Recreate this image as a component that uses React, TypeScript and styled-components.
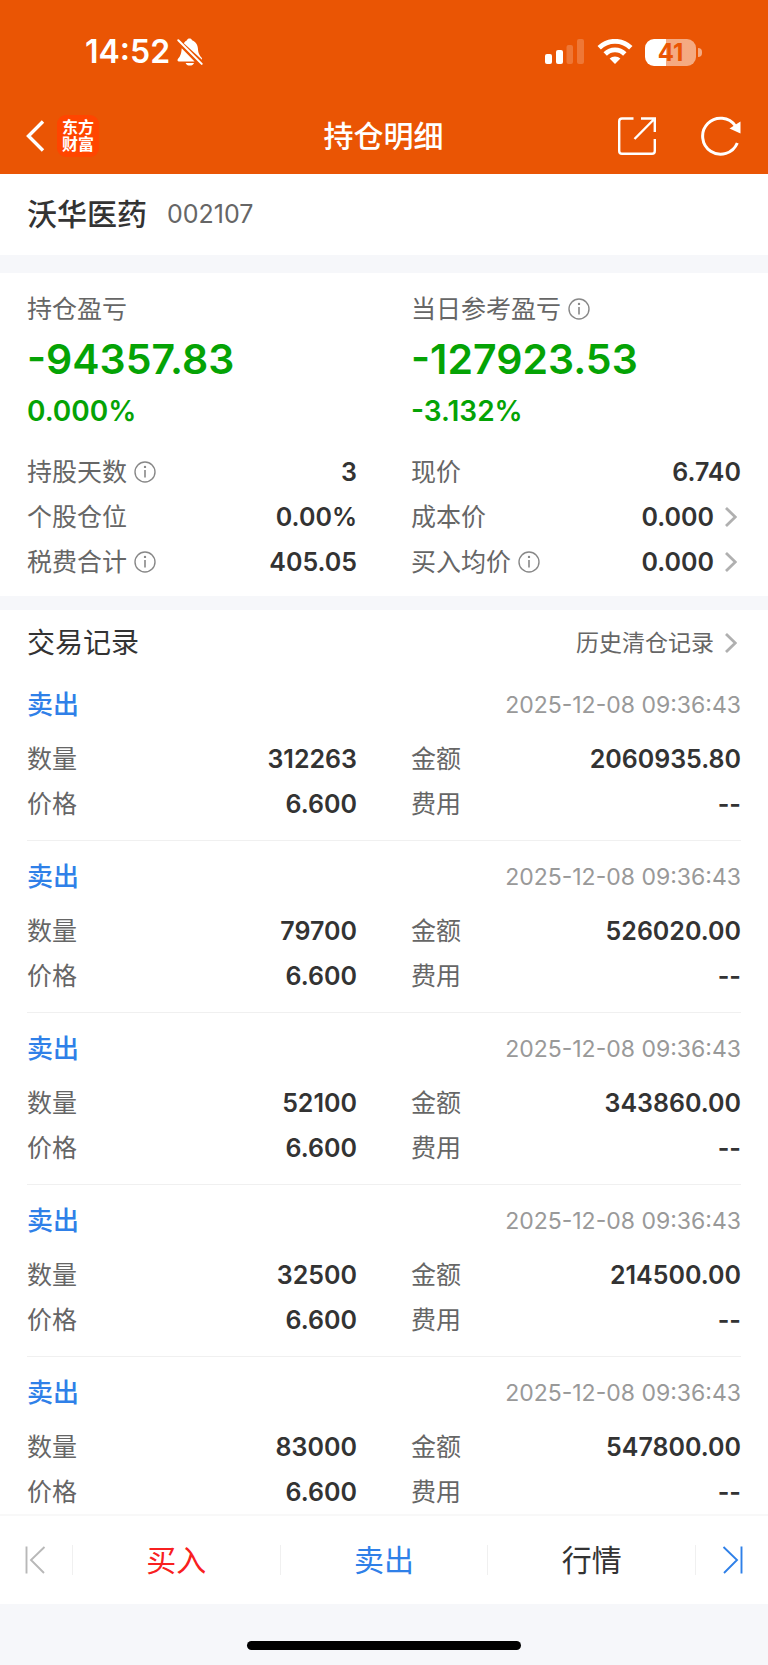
import React from "react";
import styled, { createGlobalStyle } from "styled-components";

const color = {
  brand: "#ea5504",
  ink: "#333333",
  label: "#666666",
  muted: "#999999",
  line: "#f0f0f0",
  band: "#f6f7fa",
  green: "#05a305",
  blue: "#2f80e8",
  red: "#f82020",
};

const GlobalStyle = createGlobalStyle`
  * { box-sizing: border-box; }
  body {
    margin: 0;
    background: #ffffff;
    color: ${color.ink};
    font-family: Inter, "Noto Sans CJK SC", sans-serif;
  }
  h1, h2, h3, p, dl, dd, ul { margin: 0; padding: 0; }
  button {
    padding: 0;
    border: 0;
    background: none;
    color: inherit;
    font: inherit;
    cursor: pointer;
  }
  a { color: inherit; text-decoration: none; }
  svg { display: block; flex: none; }
`;

const Screen = styled.div`
  display: flex;
  flex-direction: column;
  height: 100vh;
`;

const Header = styled.header`
  flex: none;
  padding-bottom: 6px;
  background: ${color.brand};
  color: #ffffff;
`;

const StatusBar = styled.div`
  display: flex;
  align-items: center;
  justify-content: space-between;
  height: 104px;
  padding: 0 66px 0 85px;
`;

const StatusGroup = styled.div<{ $gap: number }>`
  display: flex;
  align-items: center;
  gap: ${(p) => p.$gap}px;
`;

const Clock = styled.time`
  font-size: 32px;
  font-weight: 600;
  line-height: 40px;
`;

const Battery = styled.div`
  display: flex;
  align-items: center;
  gap: 2px;
`;

const BatteryBody = styled.div`
  width: 51px;
  height: 27px;
  border-radius: 9px;
  background: linear-gradient(90deg, #ffffff 41%, rgba(255, 255, 255, 0.5) 41%);
  color: ${color.brand};
  font-size: 24px;
  font-weight: 700;
  line-height: 27px;
  text-align: center;
`;

const BatteryNub = styled.div`
  width: 4px;
  height: 9px;
  border-radius: 0 4px 4px 0;
  background: rgba(255, 255, 255, 0.5);
`;

const NavBar = styled.nav`
  display: grid;
  grid-template-columns: 1fr auto 1fr;
  align-items: center;
  height: 64px;
  padding: 0 27px 0 26px;
`;

const NavSide = styled.div<{ $end?: boolean }>`
  display: flex;
  align-items: center;
  justify-content: ${(p) => (p.$end ? "flex-end" : "flex-start")};
  gap: ${(p) => (p.$end ? 45 : 12)}px;
`;

const Logo = styled.a`
  display: flex;
  flex-direction: column;
  align-items: center;
  justify-content: center;
  width: 42px;
  height: 42px;
  border-radius: 9px;
  background: #ff4500;
  font-size: 16px;
  font-weight: 700;
  line-height: 17px;
`;

const Title = styled.h1`
  font-size: 30px;
  font-weight: 500;
  line-height: 40px;
`;

const Content = styled.main`
  flex: 1;
  min-height: 0;
  overflow-y: auto;
  scrollbar-width: none;
`;

const StockBar = styled.section`
  display: flex;
  align-items: center;
  gap: 20px;
  height: 81px;
  padding: 0 27px 2px;
`;

const StockName = styled.h2`
  font-size: 30px;
  font-weight: 500;
  line-height: 40px;
`;

const StockCode = styled.span`
  color: ${color.label};
  font-size: 25px;
  line-height: 36px;
`;

const Band = styled.div<{ $height: number }>`
  height: ${(p) => p.$height}px;
  background: ${color.band};
`;

const Summary = styled.section`
  padding: 18px 27px 12px;
`;

const Columns = styled.div`
  display: grid;
  grid-template-columns: 1fr 1fr;
  column-gap: 54px;
`;

const Label = styled.span`
  display: flex;
  align-items: center;
  gap: 7px;
  color: ${color.label};
  font-size: 25px;
  line-height: 36px;
`;

const Amount = styled.p`
  color: ${color.green};
  font-size: 41px;
  font-weight: 600;
  line-height: 64px;
`;

const Percent = styled.p`
  color: ${color.green};
  font-size: 28px;
  font-weight: 600;
  line-height: 40px;
`;

const Facts = styled.dl`
  display: grid;
  grid-template-columns: 1fr 1fr;
  column-gap: 54px;
`;

const Fact = styled.div`
  display: flex;
  align-items: center;
  justify-content: space-between;
  height: 45px;
`;

const Value = styled.dd`
  font-size: 25px;
  font-weight: 600;
  line-height: 36px;
`;

const MoreLink = styled.a<{ $quiet?: boolean }>`
  display: flex;
  align-items: center;
  gap: 11px;
  padding-right: 4px;
  color: ${(p) => (p.$quiet ? color.label : "inherit")};
  font-size: ${(p) => (p.$quiet ? 23 : 25)}px;
`;

const FactsBlock = styled.div`
  padding-top: 18px;
`;

const Records = styled.section`
  padding: 0 27px;
`;

const RecordsHead = styled.div`
  display: flex;
  align-items: center;
  justify-content: space-between;
  height: 59px;
  padding-top: 7px;
  line-height: 36px;
`;

const RecordsTitle = styled.h2`
  font-size: 28px;
  font-weight: 400;
`;

const RecordList = styled.ul`
  list-style: none;
`;

const Record = styled.li`
  padding: 18px 0 14px;
  border-bottom: 1px solid ${color.line};
`;

const RecordHead = styled.div`
  display: flex;
  align-items: center;
  justify-content: space-between;
  height: 36px;
  margin-bottom: 13px;
`;

const Side = styled.h3`
  color: ${color.blue};
  font-size: 26px;
  font-weight: 500;
  line-height: 36px;
`;

const Stamp = styled.time`
  color: ${color.muted};
  font-size: 23px;
  line-height: 36px;
`;

const Footer = styled.footer`
  flex: none;
  border-top: 2px solid #f8f8f8;
`;

const Actions = styled.div`
  display: flex;
  align-items: center;
  height: 88px;
`;

const StepButton = styled.button`
  display: flex;
  align-items: center;
  justify-content: center;
  width: 72px;
  height: 100%;
`;

const ActionButton = styled.button<{ $tone: string }>`
  flex: 1;
  height: 30px;
  border-left: 1px solid ${color.line};
  color: ${(p) => p.$tone};
  font-size: 30px;
  line-height: 30px;

  &:last-of-type {
    border-right: 1px solid ${color.line};
  }
`;

const ActionGroup = styled.div`
  display: flex;
  flex: 1;
`;

const HomeArea = styled.div`
  display: flex;
  justify-content: center;
  height: 61px;
  padding-top: 37px;
  background: ${color.band};
`;

const HomeIndicator = styled.div`
  width: 274px;
  height: 9px;
  border-radius: 5px;
  background: #000000;
`;

const InfoIcon = () => (
  <svg width="22" height="22" viewBox="0 0 22 22" fill="none" stroke="#888888">
    <circle cx="11" cy="11" r="10" strokeWidth="1.4" />
    <path d="M11 9v7.5" strokeWidth="1.6" />
    <circle cx="11" cy="5.9" r="1.2" fill="#888888" stroke="none" />
  </svg>
);

const InfoButton = ({ about }: { about: string }) => (
  <button type="button" aria-label={`${about}说明`}>
    <InfoIcon />
  </button>
);

const Chevron = () => (
  <svg width="12" height="20" viewBox="0 0 12 20" fill="none" stroke="#b0b0b0" strokeWidth="2.8">
    <path d="M1 1l9.3 9L1 19" />
  </svg>
);

const MutedBell = () => (
  <svg width="26" height="28" viewBox="0 0 26 28" fill="#ffffff">
    <path d="M6.8 5.2A6.8 6.8 0 0 1 10 2.2C10.2 1 11.3.4 12.5.4S14.8 1 15 2.2C18.2 3.3 20.6 6.2 20.9 10.2C21.2 15 22.3 17 24.5 19.5C25.1 20.3 25.2 21 25 21.8Z" />
    <path d="M4.7 10.3L17.6 23.6H1.9C.6 23.6.1 22.2.9 21.1C3 18.6 4.3 16.5 4.7 10.3Z" />
    <path d="M8.6 25H17C16.5 26.7 14.8 27.6 12.8 27.6S9.1 26.7 8.6 25Z" />
    <path d="M1.3 2.3L24.7 25.9" stroke="#ffffff" strokeWidth="2" strokeLinecap="round" />
  </svg>
);

const Signal = () => (
  <svg width="40" height="26" viewBox="0 0 40 26" fill="#ffffff">
    <rect x="0" y="15" width="7" height="10" rx="2" />
    <rect x="11" y="11" width="7" height="14" rx="2" />
    <rect x="21.5" y="6" width="6.5" height="19" rx="2" opacity=".2" />
    <rect x="32" y="0" width="7" height="25" rx="2" opacity=".2" />
  </svg>
);

const Wifi = () => (
  <svg width="36" height="26" viewBox="0 0 36 26" fill="none" stroke="#ffffff" strokeWidth="4.8">
    <path d="M2.2 8.8A22.4 22.4 0 0 1 33.8 8.8" />
    <path d="M8.2 15A13.8 13.8 0 0 1 27.8 15" />
    <path d="M18 25L12.6 19.6A7.8 7.8 0 0 1 23.4 19.6Z" fill="#ffffff" stroke="none" />
  </svg>
);

const BackIcon = () => (
  <svg width="19" height="32" viewBox="0 0 19 32" fill="none" stroke="#ffffff" strokeWidth="3.4">
    <path d="M17 1.5L2.5 16L17 30.5" />
  </svg>
);

const ShareIcon = () => (
  <svg width="38" height="38" viewBox="0 0 38 38" fill="none" stroke="#ffffff" strokeWidth="2.4">
    <path d="M15.5 1.5H4Q1.2 1.5 1.2 4.3V34Q1.2 36.8 4 36.8H34Q36.8 36.8 36.8 34V22" />
    <path d="M23 1.5H36.8V15M36.8 1.5L16.5 22" />
  </svg>
);

const RefreshIcon = () => (
  <svg width="40" height="40" viewBox="0 0 40 40" fill="none" stroke="#ffffff" strokeWidth="3">
    <path d="M36.3 27A18 18 0 1 1 34.5 10" />
    <path d="M39.5 5.5V17.5L28.5 12.6Z" fill="#ffffff" stroke="none" />
  </svg>
);

const FirstIcon = () => (
  <svg width="22" height="28" viewBox="0 0 22 28" fill="none" stroke="#b8b8b8" strokeWidth="1.9">
    <path d="M1.5 .5V27.5M19.5 1L6 14L19 27" />
  </svg>
);

const LastIcon = () => (
  <svg width="22" height="28" viewBox="0 0 22 28" fill="none" stroke={color.blue} strokeWidth="1.9">
    <path d="M20.5 .5V27.5M2.5 1L16 14L3 27" />
  </svg>
);

type FactItem = { label: string; value: string; info?: boolean; more?: boolean };

const FactRow = ({ label, value, info, more }: FactItem) => (
  <Fact>
    <Label as="dt">
      {label}
      {info && <InfoButton about={label} />}
    </Label>
    <Value>
      {more ? (
        <MoreLink href="#detail">
          {value}
          <Chevron />
        </MoreLink>
      ) : (
        value
      )}
    </Value>
  </Fact>
);

const facts: FactItem[] = [
  { label: "持股天数", value: "3", info: true },
  { label: "现价", value: "6.740" },
  { label: "个股仓位", value: "0.00%" },
  { label: "成本价", value: "0.000", more: true },
  { label: "税费合计", value: "405.05", info: true },
  { label: "买入均价", value: "0.000", info: true, more: true },
];

const records = [
  { quantity: "312263", total: "2060935.80" },
  { quantity: "79700", total: "526020.00" },
  { quantity: "52100", total: "343860.00" },
  { quantity: "32500", total: "214500.00" },
  { quantity: "83000", total: "547800.00" },
];

export default function App() {
  return (
    <Screen>
      <GlobalStyle />
      <Header>
        <StatusBar>
          <StatusGroup $gap={7}>
            <Clock>14:52</Clock>
            <MutedBell />
          </StatusGroup>
          <StatusGroup $gap={12}>
            <Signal />
            <Wifi />
            <Battery>
              <BatteryBody>41</BatteryBody>
              <BatteryNub />
            </Battery>
          </StatusGroup>
        </StatusBar>
        <NavBar>
          <NavSide>
            <button type="button" aria-label="返回">
              <BackIcon />
            </button>
            <Logo href="#home">
              <span>东方</span>
              <span>财富</span>
            </Logo>
          </NavSide>
          <Title>持仓明细</Title>
          <NavSide $end>
            <button type="button" aria-label="分享">
              <ShareIcon />
            </button>
            <button type="button" aria-label="刷新">
              <RefreshIcon />
            </button>
          </NavSide>
        </NavBar>
      </Header>

      <Content>
        <StockBar>
          <StockName>沃华医药</StockName>
          <StockCode>002107</StockCode>
        </StockBar>
        <Band $height={18} />

        <Summary>
          <Columns>
            <div>
              <Label>持仓盈亏</Label>
              <Amount>-94357.83</Amount>
              <Percent>0.000%</Percent>
            </div>
            <div>
              <Label>
                当日参考盈亏
                <InfoButton about="当日参考盈亏" />
              </Label>
              <Amount>-127923.53</Amount>
              <Percent>-3.132%</Percent>
            </div>
          </Columns>
          <FactsBlock>
            <Facts>
              {facts.map((fact) => (
                <FactRow key={fact.label} {...fact} />
              ))}
            </Facts>
          </FactsBlock>
        </Summary>
        <Band $height={14} />

        <Records>
          <RecordsHead>
            <RecordsTitle>交易记录</RecordsTitle>
            <MoreLink href="#history" $quiet>
              历史清仓记录
              <Chevron />
            </MoreLink>
          </RecordsHead>
          <RecordList>
            {records.map((record) => (
              <Record key={record.quantity}>
                <RecordHead>
                  <Side>卖出</Side>
                  <Stamp>2025-12-08 09:36:43</Stamp>
                </RecordHead>
                <Facts>
                  <FactRow label="数量" value={record.quantity} />
                  <FactRow label="金额" value={record.total} />
                  <FactRow label="价格" value="6.600" />
                  <FactRow label="费用" value="--" />
                </Facts>
              </Record>
            ))}
          </RecordList>
        </Records>
      </Content>

      <Footer>
        <Actions>
          <StepButton type="button" aria-label="上一只">
            <FirstIcon />
          </StepButton>
          <ActionGroup>
            <ActionButton type="button" $tone={color.red}>买入</ActionButton>
            <ActionButton type="button" $tone={color.blue}>卖出</ActionButton>
            <ActionButton type="button" $tone={color.ink}>行情</ActionButton>
          </ActionGroup>
          <StepButton type="button" aria-label="下一只">
            <LastIcon />
          </StepButton>
        </Actions>
        <HomeArea>
          <HomeIndicator />
        </HomeArea>
      </Footer>
    </Screen>
  );
}
